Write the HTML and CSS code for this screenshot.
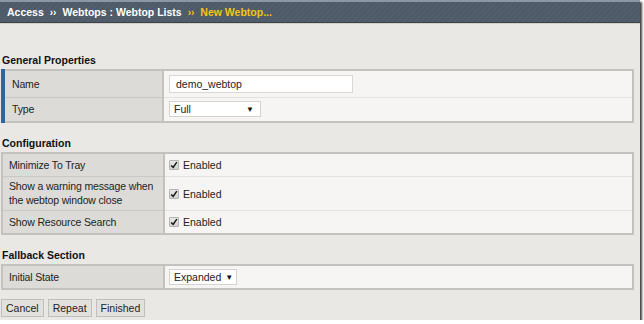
FILE: index.html
```html
<!DOCTYPE html>
<html lang="en">
<head>
  <meta charset="UTF-8">
  <title>New Webtop</title>
  <link rel="stylesheet" href="styles.css">
</head>
<body>
  <div class="frame">
    <div class="crumbs">
      <span>Access</span>
      <span class="sep">&rsaquo;&rsaquo;</span>
      <span>Webtops : Webtop Lists</span>
      <span class="sep current">&rsaquo;&rsaquo;</span>
      <span class="current">New Webtop...</span>
    </div>

    <div class="content">
      <h3 class="section-title first">General Properties</h3>
      <table class="props general">
        <tr class="row-name">
          <td class="label">Name</td>
          <td class="value"><input class="text-input" type="text" value="demo_webtop"></td>
        </tr>
        <tr class="row-type">
          <td class="label">Type</td>
          <td class="value"><span class="select select-type">Full<span class="arrow">&#9660;</span></span></td>
        </tr>
      </table>

      <h3 class="section-title">Configuration</h3>
      <table class="props">
        <tr class="row-a">
          <td class="label">Minimize To Tray</td>
          <td class="value"><label class="check"><span class="box"><svg viewBox="0 0 10 10" width="8" height="8"><path d="M1.5 5.5 L4 8 L8.5 1.5" fill="none" stroke="#111" stroke-width="1.8"/></svg></span>Enabled</label></td>
        </tr>
        <tr class="row-b">
          <td class="label">Show a warning message when the webtop window close</td>
          <td class="value"><label class="check"><span class="box"><svg viewBox="0 0 10 10" width="8" height="8"><path d="M1.5 5.5 L4 8 L8.5 1.5" fill="none" stroke="#111" stroke-width="1.8"/></svg></span>Enabled</label></td>
        </tr>
        <tr class="row-c">
          <td class="label">Show Resource Search</td>
          <td class="value"><label class="check"><span class="box"><svg viewBox="0 0 10 10" width="8" height="8"><path d="M1.5 5.5 L4 8 L8.5 1.5" fill="none" stroke="#111" stroke-width="1.8"/></svg></span>Enabled</label></td>
        </tr>
      </table>

      <h3 class="section-title">Fallback Section</h3>
      <table class="props">
        <tr class="row-c">
          <td class="label">Initial State</td>
          <td class="value"><span class="select select-state">Expanded<span class="arrow">&#9660;</span></span></td>
        </tr>
      </table>

      <div class="actions">
        <button class="btn">Cancel</button>
        <button class="btn">Repeat</button>
        <button class="btn">Finished</button>
      </div>
    </div>
  </div>
</body>
</html>
```

FILE: styles.css
```css
body {
  margin: 0;
  background: #ffffff;
  font-family: "Liberation Sans", Arial, sans-serif;
  font-size: 10.5px;
  color: #222;
}

.frame {
  width: 640px;
  height: 320px;
  background: #e9e8e4;
  box-shadow: 2px 2px 2px rgba(0, 0, 0, 0.75);
  overflow: hidden;
}

.crumbs {
  height: 20px;
  padding-left: 7px;
  display: flex;
  align-items: center;
  gap: 4px;
  font-weight: bold;
  font-size: 10.5px;
  color: #ffffff;
  border-top: 2px solid #8b97a4;
  border-bottom: 1px solid #3a424b;
  background: repeating-linear-gradient(135deg, #4e5a68 0, #4e5a68 2px, #525e6c 2px, #525e6c 4px);
  box-shadow: 0 1px 0 #d3cec8;
}

.crumbs .sep {
  font-size: 10px;
  margin: 0 2px;
}

.crumbs .current {
  color: #f6c513;
}

.content {
  padding: 0 0 0 1px;
}

.section-title {
  margin: 14px 0 2px 1px;
  font-size: 10.5px;
  font-weight: bold;
  color: #111;
  line-height: 13px;
}

.section-title.first {
  margin-top: 31px;
}

.props {
  width: 633px;
  border-collapse: collapse;
  border: 2px solid #c3c2be;
}

.props td {
  padding: 0;
  border-bottom: 1px solid #e3e2de;
  vertical-align: middle;
}

.props .label {
  width: 154px;
  padding-left: 6px;
  background: #dcdbd7;
  border-right: 2px solid #c3c2be;
  border-bottom-color: #c9c8c4;
  line-height: 14px;
  letter-spacing: -0.15px;
}

.props .value {
  background: #f6f5f3;
  padding-left: 4px;
}

.general .label {
  width: 150px;
  padding-left: 7px;
  border-left: 4px solid #2e679f;
}

.general .value {
  padding-left: 5px;
}

.row-name { height: 27px; }
.row-type { height: 25px; }
.row-a { height: 23px; }
.row-b { height: 34px; }
.row-c { height: 24px; }

.text-input {
  box-sizing: border-box;
  width: 184px;
  height: 18px;
  margin: 0;
  padding: 0 6px;
  border: 1px solid #d8d7d3;
  background: #ffffff;
  font-family: inherit;
  font-size: 10.5px;
  color: #222;
  display: block;
}

.select {
  box-sizing: border-box;
  height: 16px;
  padding: 0 6px 0 4px;
  border: 1px solid #d4d3cf;
  background: #ffffff;
  display: flex;
  align-items: center;
  justify-content: space-between;
  font-size: 10.5px;
  color: #222;
}

.select .arrow {
  font-size: 8px;
  color: #111;
}

.select-type { width: 92px; }
.select-state { width: 68px; }

.select-state .arrow {
  margin-left: 4px;
}

.check {
  display: flex;
  align-items: center;
  gap: 4px;
  padding-top: 1px;
}

.check .box {
  box-sizing: border-box;
  width: 10px;
  height: 10px;
  border: 1px solid #b5b4b0;
  border-radius: 1px;
  background: linear-gradient(#e8e8e8, #d2d2d2);
  display: flex;
  align-items: center;
  justify-content: center;
}

.actions {
  display: flex;
  gap: 4px;
  margin-top: 9px;
}

.btn {
  height: 18px;
  padding: 0 4px;
  border: 1px solid #c0bfbb;
  background: #e2e1dd;
  font-family: inherit;
  font-size: 10.5px;
  color: #222;
}
```
